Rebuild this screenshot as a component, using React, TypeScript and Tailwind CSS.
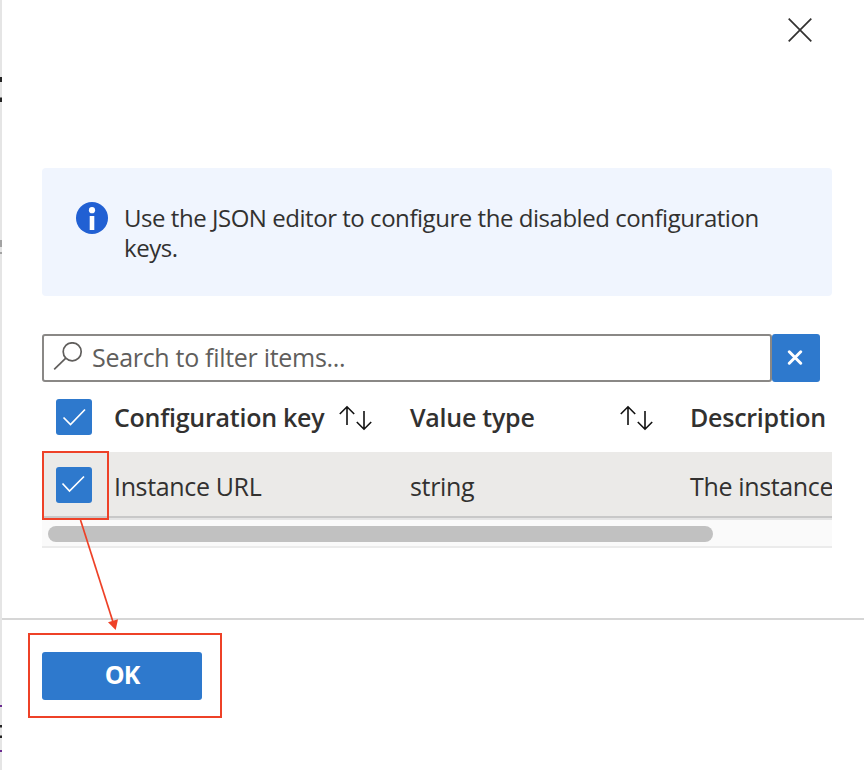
import type { ReactNode } from "react"

const columns = [
  { key: "key", label: "Configuration key", width: "w-[296px]", gap: "gap-[15px]", sortable: true },
  { key: "type", label: "Value type", width: "w-[280px]", gap: "justify-between pr-[36px]", sortable: true },
  { key: "description", label: "Description", width: "w-[300px]", gap: "", sortable: false },
]

const row = { key: "Instance URL", type: "string", description: "The instance URL" }

function InfoIcon() {
  return (
    <svg width="32" height="32" viewBox="0 0 32 32" className="shrink-0">
      <circle cx="16" cy="16" r="16" fill="#2160d3" />
      <circle cx="16" cy="8.2" r="3.1" fill="#fff" />
      <rect x="13.7" y="14" width="4.6" height="14" fill="#fff" />
    </svg>
  )
}

function SearchIcon() {
  return (
    <svg width="30" height="30" viewBox="0 0 30 30" fill="none" stroke="#605e5c" strokeWidth="1.7" className="shrink-0">
      <circle cx="19.2" cy="8.9" r="9" transform="translate(0 .9)" />
      <path d="M12.8 16.2 1.2 27.4" />
    </svg>
  )
}

function SortIcon() {
  return (
    <svg width="34" height="26" viewBox="0 0 34 26" fill="none" stroke="#111" strokeWidth="1.6" className="shrink-0">
      <path d="M8 20V2M.8 9 8 1.8 15.2 9" />
      <path d="M25 6v18M17.8 17l7.2 7.2 7.2-7.2" />
    </svg>
  )
}

function Checkbox({ children }: { children: ReactNode }) {
  return (
    <span className="block h-9 w-9 shrink-0 rounded-[3px] bg-[#2e79cd]">
      <svg width="36" height="36" fill="none" stroke="#fff" strokeWidth="1.7">
        {children}
      </svg>
    </span>
  )
}

// Sliver of the page that stays visible beside the panel
function PageEdge() {
  return (
    <svg width="2" height="770" className="shrink-0 bg-[#e5e5e5]">
      <path d="M0 77h2v5H0zM0 97.5h2v4.5H0z" fill="#242424" />
      <path d="M0 240h2v7H0zM0 252h2v2H0z" fill="#a3a3a3" />
      <path d="M0 705h2v2H0zM0 750h2v2H0z" fill="#6b2c91" />
      <path d="M0 725h2v2.5H0zM0 735.5h2v2.5H0z" fill="#242424" />
    </svg>
  )
}

export default function App() {
  return (
    <div className="relative flex h-[770px] w-[864px] overflow-hidden bg-white font-['Open_Sans','Noto_Sans',sans-serif] text-[25px] leading-[30px] text-[#323130]">
      <PageEdge />
      <div className="flex w-[862px] flex-col">
        <header className="flex h-[168px] shrink-0 justify-end pt-[18px] pr-[52px]">
          <button aria-label="Close" className="h-6 w-6">
            <svg width="24" height="24" fill="none" stroke="#323130" strokeWidth="1.7">
              <path d="M.7.7l22.6 22.6M23.3.7.7 23.3" />
            </svg>
          </button>
        </header>

        <main className="ml-10 flex h-[450px] w-[790px] shrink-0 flex-col">
          <div className="flex h-32 shrink-0 gap-4 rounded bg-[#f0f5fe] pt-[34px] pl-[34px]">
            <InfoIcon />
            <p className="pt-px text-[24px] leading-[30px] whitespace-nowrap tracking-[-0.46px]">
              Use the JSON editor to configure the disabled configuration
              <br />
              keys.
            </p>
          </div>

          <div className="mt-[38px] flex h-12 w-[778px] shrink-0">
            <div className="flex w-[730px] items-center gap-[9px] rounded-[3px] border-2 border-[#8a8886] pb-0.5 pl-[9px] text-[#605e5c]">
              <SearchIcon />
              <span className="tracking-[-0.3px]">Search to filter items...</span>
            </div>
            <button aria-label="Clear" className="flex w-12 items-center justify-center rounded-[3px] bg-[#2e79cd] pr-[2px]">
              <svg width="16" height="16" fill="none" stroke="#fff" strokeWidth="3" strokeLinecap="round">
                <path d="M2.3 1.8l11.4 11.4M13.7 1.8 2.3 13.2" />
              </svg>
            </button>
          </div>

          <div className="shrink-0 overflow-hidden">
            <div className="flex h-[70px] w-[1000px] items-center pl-3.5">
              <Checkbox>
                <path d="m7.5 18.5 7 7L29 10.5" />
              </Checkbox>
              <div className="ml-[22px] flex font-semibold">
                {columns.map((col) => (
                  <div key={col.key} className={`flex shrink-0 items-center ${col.width} ${col.gap}`}>
                    <span className="tracking-[-0.25px]">{col.label}</span>
                    {col.sortable && (
                      <span className="mt-0.5">
                        <SortIcon />
                      </span>
                    )}
                  </div>
                ))}
              </div>
            </div>
            <div className="flex h-[66px] w-[1000px] border-b-2 border-[#c8c8c8] bg-[#ebeae8] pt-[15px] pl-3.5">
              <Checkbox>
                <path d="m6.5 16.5 7 7.5L28 9.5" />
              </Checkbox>
              <div className="mt-1 ml-[22px] flex tracking-[-0.35px]">
                <span className="w-[296px] shrink-0">{row.key}</span>
                <span className="w-[280px] shrink-0">{row.type}</span>
                <span className="w-[300px] shrink-0">{row.description}</span>
              </div>
            </div>
            <div className="h-[30px] border-y-2 border-t-[#e4e4e4] border-b-[#ebebeb] bg-[#fafafa] pt-1.5 pl-1.5">
              <div className="h-4 w-[665px] rounded-full bg-[#c1c1c1]" />
            </div>
          </div>
        </main>

        <footer className="flex-1 border-t-2 border-[#d6d6d6] pt-8 pl-10">
          <button className="flex h-12 w-40 items-center justify-center rounded-[3px] bg-[#2e79cd] pb-1 font-bold tracking-[-0.9px] text-white">
            OK
          </button>
        </footer>
      </div>

      {/* Callouts over the selected row and the confirm button */}
      <svg width="864" height="770" fill="none" stroke="#ee4127" strokeWidth="2" className="pointer-events-none absolute inset-0">
        <rect x="43" y="452" width="65" height="67" />
        <rect x="29" y="634" width="192" height="83" />
        <path d="M80.5 520 113 622" strokeWidth="1.7" />
        <path d="M108 622.3 118 619.3 115.7 630z" fill="#ee4127" stroke="none" />
      </svg>
    </div>
  )
}
